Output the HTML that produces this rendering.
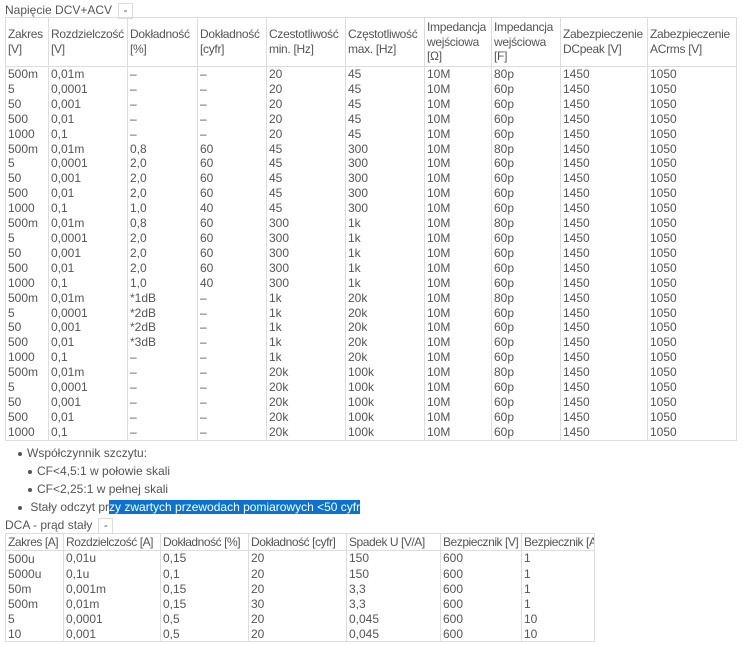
<!DOCTYPE html>
<html><head><meta charset="utf-8"><style>
body{margin:0;background:#fff;font-family:"Liberation Sans",Arial,sans-serif;font-size:12px;color:#555;}
.t{position:absolute;left:5px;}
table{border-collapse:collapse;table-layout:fixed;border:1px solid #ddd;}
td,th{font-weight:normal;text-align:left;padding:0 2px;line-height:14.9px;border-left:1px solid #ddd;border-right:1px solid #ddd;vertical-align:top;white-space:nowrap;overflow:hidden;}
thead th{border-bottom:1px solid #ddd;vertical-align:middle;white-space:normal;letter-spacing:-0.3px;padding:0 1px 0 2px}
.t2 thead th{white-space:nowrap;letter-spacing:-0.45px}
.box{display:inline-block;border:1px solid #ddd;width:13px;height:14px;text-align:center;line-height:13px;margin-left:6px;vertical-align:top}
ul{margin:0;padding:0;list-style:none}
li{position:relative;line-height:18px}
li:before{content:"";position:absolute;width:4px;height:4px;border-radius:2px;background:#555;left:-9px;top:8px}
.hl{background:#0a72d3;color:#fff}
</style></head><body>
<div class="t" style="top:3px;line-height:14px">Napięcie DCV+ACV<span class="box">-</span></div>
<div class="t" style="top:17px">
<table style="width:732px">
<colgroup><col style="width:43px"><col style="width:79px"><col style="width:70px"><col style="width:69px"><col style="width:79px"><col style="width:79px"><col style="width:67px"><col style="width:69px"><col style="width:87px"><col style="width:89px"></colgroup>
<thead><tr style="height:49px"><th>Zakres [V]</th><th>Rozdzielczość [V]</th><th>Dokładność [%]</th><th>Dokładność [cyfr]</th><th>Czestotliwość min. [Hz]</th><th>Częstotliwość max. [Hz]</th><th>Impedancja wejściowa [Ω]</th><th>Impedancja wejściowa [F]</th><th>Zabezpieczenie DCpeak [V]</th><th>Zabezpieczenie ACrms [V]</th></tr></thead>
<tbody>
<tr><td>500m</td><td>0,01m</td><td>–</td><td>–</td><td>20</td><td>45</td><td>10M</td><td>80p</td><td>1450</td><td>1050</td></tr>
<tr><td>5</td><td>0,0001</td><td>–</td><td>–</td><td>20</td><td>45</td><td>10M</td><td>60p</td><td>1450</td><td>1050</td></tr>
<tr><td>50</td><td>0,001</td><td>–</td><td>–</td><td>20</td><td>45</td><td>10M</td><td>60p</td><td>1450</td><td>1050</td></tr>
<tr><td>500</td><td>0,01</td><td>–</td><td>–</td><td>20</td><td>45</td><td>10M</td><td>60p</td><td>1450</td><td>1050</td></tr>
<tr><td>1000</td><td>0,1</td><td>–</td><td>–</td><td>20</td><td>45</td><td>10M</td><td>60p</td><td>1450</td><td>1050</td></tr>
<tr><td>500m</td><td>0,01m</td><td>0,8</td><td>60</td><td>45</td><td>300</td><td>10M</td><td>80p</td><td>1450</td><td>1050</td></tr>
<tr><td>5</td><td>0,0001</td><td>2,0</td><td>60</td><td>45</td><td>300</td><td>10M</td><td>60p</td><td>1450</td><td>1050</td></tr>
<tr><td>50</td><td>0,001</td><td>2,0</td><td>60</td><td>45</td><td>300</td><td>10M</td><td>60p</td><td>1450</td><td>1050</td></tr>
<tr><td>500</td><td>0,01</td><td>2,0</td><td>60</td><td>45</td><td>300</td><td>10M</td><td>60p</td><td>1450</td><td>1050</td></tr>
<tr><td>1000</td><td>0,1</td><td>1,0</td><td>40</td><td>45</td><td>300</td><td>10M</td><td>60p</td><td>1450</td><td>1050</td></tr>
<tr><td>500m</td><td>0,01m</td><td>0,8</td><td>60</td><td>300</td><td>1k</td><td>10M</td><td>80p</td><td>1450</td><td>1050</td></tr>
<tr><td>5</td><td>0,0001</td><td>2,0</td><td>60</td><td>300</td><td>1k</td><td>10M</td><td>60p</td><td>1450</td><td>1050</td></tr>
<tr><td>50</td><td>0,001</td><td>2,0</td><td>60</td><td>300</td><td>1k</td><td>10M</td><td>60p</td><td>1450</td><td>1050</td></tr>
<tr><td>500</td><td>0,01</td><td>2,0</td><td>60</td><td>300</td><td>1k</td><td>10M</td><td>60p</td><td>1450</td><td>1050</td></tr>
<tr><td>1000</td><td>0,1</td><td>1,0</td><td>40</td><td>300</td><td>1k</td><td>10M</td><td>60p</td><td>1450</td><td>1050</td></tr>
<tr><td>500m</td><td>0,01m</td><td>*1dB</td><td>–</td><td>1k</td><td>20k</td><td>10M</td><td>80p</td><td>1450</td><td>1050</td></tr>
<tr><td>5</td><td>0,0001</td><td>*2dB</td><td>–</td><td>1k</td><td>20k</td><td>10M</td><td>60p</td><td>1450</td><td>1050</td></tr>
<tr><td>50</td><td>0,001</td><td>*2dB</td><td>–</td><td>1k</td><td>20k</td><td>10M</td><td>60p</td><td>1450</td><td>1050</td></tr>
<tr><td>500</td><td>0,01</td><td>*3dB</td><td>–</td><td>1k</td><td>20k</td><td>10M</td><td>60p</td><td>1450</td><td>1050</td></tr>
<tr><td>1000</td><td>0,1</td><td>–</td><td>–</td><td>1k</td><td>20k</td><td>10M</td><td>60p</td><td>1450</td><td>1050</td></tr>
<tr><td>500m</td><td>0,01m</td><td>–</td><td>–</td><td>20k</td><td>100k</td><td>10M</td><td>80p</td><td>1450</td><td>1050</td></tr>
<tr><td>5</td><td>0,0001</td><td>–</td><td>–</td><td>20k</td><td>100k</td><td>10M</td><td>60p</td><td>1450</td><td>1050</td></tr>
<tr><td>50</td><td>0,001</td><td>–</td><td>–</td><td>20k</td><td>100k</td><td>10M</td><td>60p</td><td>1450</td><td>1050</td></tr>
<tr><td>500</td><td>0,01</td><td>–</td><td>–</td><td>20k</td><td>100k</td><td>10M</td><td>60p</td><td>1450</td><td>1050</td></tr>
<tr><td>1000</td><td>0,1</td><td>–</td><td>–</td><td>20k</td><td>100k</td><td>10M</td><td>60p</td><td>1450</td><td>1050</td></tr>
</tbody></table></div>
<div style="position:absolute;left:27px;top:444px">
<ul><li>Współczynnik szczytu:
<ul style="margin-left:10px"><li>CF&lt;4,5:1 w połowie skali</li><li>CF&lt;2,25:1 w pełnej skali</li></ul></li>
<li>&nbsp;Stały odczyt pr<span class="hl">zy zwartych przewodach pomiarowych &lt;50 cyfr</span></li></ul></div>
<div class="t" style="top:518px;line-height:14px">DCA - prąd stały<span class="box">-</span></div>
<div class="t" style="top:533px">
<table class="t2" style="width:589px">
<colgroup><col style="width:58px"><col style="width:97px"><col style="width:88px"><col style="width:98px"><col style="width:94px"><col style="width:81px"><col style="width:73px"></colgroup>
<thead><tr style="height:17px"><th>Zakres [A]</th><th>Rozdzielczość [A]</th><th>Dokładność [%]</th><th>Dokładność [cyfr]</th><th>Spadek U [V/A]</th><th>Bezpiecznik [V]</th><th>Bezpiecznik [A]</th></tr></thead>
<tbody>
<tr><td style="padding-top:1px">500u</td><td>0,01u</td><td>0,15</td><td>20</td><td>150</td><td>600</td><td>1</td></tr>
<tr><td>5000u</td><td>0,1u</td><td>0,1</td><td>20</td><td>150</td><td>600</td><td>1</td></tr>
<tr><td>50m</td><td>0,001m</td><td>0,15</td><td>20</td><td>3,3</td><td>600</td><td>1</td></tr>
<tr><td>500m</td><td>0,01m</td><td>0,15</td><td>30</td><td>3,3</td><td>600</td><td>1</td></tr>
<tr><td>5</td><td>0,0001</td><td>0,5</td><td>20</td><td>0,045</td><td>600</td><td>10</td></tr>
<tr><td>10</td><td>0,001</td><td>0,5</td><td>20</td><td>0,045</td><td>600</td><td>10</td></tr>
</tbody></table></div>
</body></html>
